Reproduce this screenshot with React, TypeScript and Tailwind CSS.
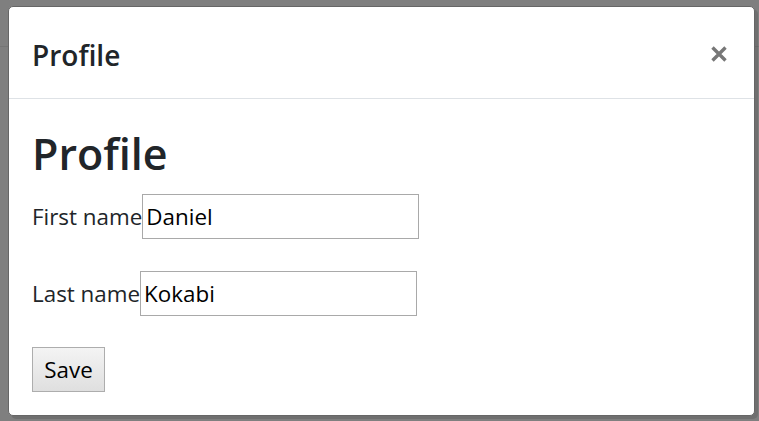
import React from "react";

const font = { fontFamily: '"Open Sans", "Noto Sans", Arial, sans-serif' };

const CloseIcon = () => (
  <svg width="18" height="18" viewBox="0 0 18 18" aria-hidden="true">
    <path d="M2.5 2.5 L15.5 15.5 M15.5 2.5 L2.5 15.5" stroke="#777777" strokeWidth="3.4" strokeLinecap="butt" />
  </svg>
);

const Field = ({ label, value }: { label: string; value: string }) => (
  <div className="flex items-baseline">
    <label className="text-[22.4px] text-[#212529]">{label}</label>
    <input
      defaultValue={value}
      className="h-[45px] w-[277px] border border-[#a9a9a9] bg-white px-[3px] text-[22.4px] text-black outline-none"
      style={font}
    />
  </div>
);

export default function App() {
  return (
    <div className="relative h-[421px] w-full overflow-hidden bg-[#7f7f7f]" style={font}>
      {/* page behind the backdrop */}
      <div className="h-[47px] border-b border-[#757575]" />

      {/* modal */}
      <div className="absolute inset-0 pl-[8px] pr-[4px] pt-[6px] pb-[5px]">
        <div className="flex h-full flex-col rounded-[5px] border border-[#666] bg-white shadow-[3px_3px_0_rgba(0,0,0,0.12)]">
          <div className="flex items-start justify-between border-b border-[#dee2e6] pl-[23px] pr-[26px]">
            <h5 className="pt-[27px] pb-[22px] text-[28px] leading-[42px] font-semibold text-[#212529]">Profile</h5>
            <button className="mt-[38px]">
              <CloseIcon />
            </button>
          </div>
          <div className="flex flex-col items-start px-[23px] pt-[30px]">
            <h1 className="text-[43px] leading-[49px] font-semibold text-[#212529]">Profile</h1>
            <div className="mt-[16px] flex flex-col gap-[32px]">
              <Field label="First name" value="Daniel" />
              <Field label="Last name" value="Kokabi" />
            </div>
            <button
              className="mt-[31px] flex h-[45px] w-[73px] items-center justify-center border border-[#adadad] bg-gradient-to-b from-[#f4f4f4] to-[#dfdfdf] text-[22.4px] text-black"
              style={font}
            >
              Save
            </button>
          </div>
        </div>
      </div>
    </div>
  );
}
